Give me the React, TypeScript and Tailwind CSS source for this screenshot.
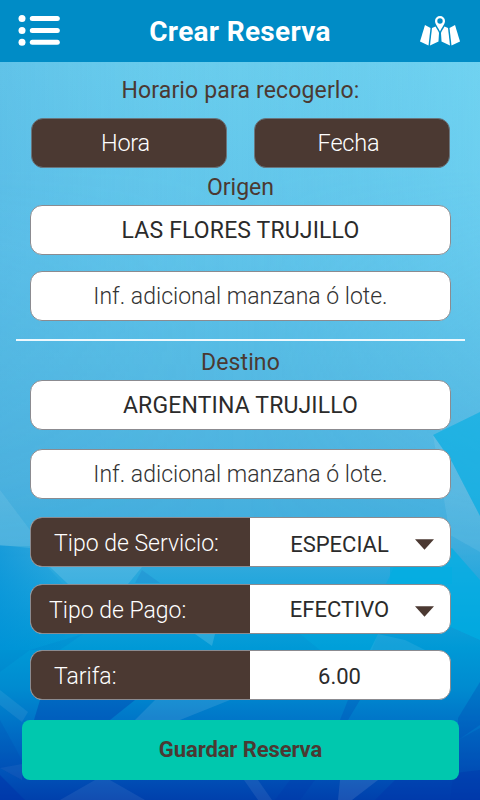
import type React from "react"
import clsx from "clsx"

const fieldClass = "flex h-[50px] w-full items-center justify-center rounded-xl border border-[#8b8b90] bg-white"

export default function App() {
  return (
    <div className="relative h-[800px] w-[480px] overflow-hidden font-[Roboto,sans-serif] text-[#4b3932]">
      <Background />

      <div className="relative flex h-full flex-col">
        <Header />

        <main className="flex flex-col pl-[30px] pr-[29px]">
          <Label className="h-14 pt-[2px] tracking-[0.15px]">Horario para recogerlo:</Label>
          <div className="flex justify-between px-px">
            <PickerButton>Hora</PickerButton>
            <PickerButton>Fecha</PickerButton>
          </div>

          <Label className="h-[37px] pt-1">Origen</Label>
          <Address>LAS FLORES TRUJILLO</Address>
          <ExtraInfo className="mt-4" />

          <div className="-ml-[14px] mt-[18px] h-[2px] w-[449px] bg-[#eef9fe]" />

          <Label className="h-[39px] pt-1.5 tracking-[0.1px]">Destino</Label>
          <Address>ARGENTINA TRUJILLO</Address>
          <ExtraInfo className="mt-[19px]" />

          <OptionRow className="mt-[18px]" label="Tipo de Servicio:" value="ESPECIAL" valueClass="pt-1" select />
          <OptionRow
            className="mt-[17px]"
            label="Tipo de Pago:"
            value="EFECTIVO"
            labelClass="pl-[18px]"
            valueClass="pt-px"
            select
          />
          <OptionRow className="mt-4" label="Tarifa:" value="6.00" valueClass="pt-[2px]" />
        </main>

        <button className="ml-[22px] mt-5 h-[60px] w-[437px] rounded-lg bg-[#00c8ae] pb-px text-[22px] font-bold tracking-[-0.1px]">
          Guardar Reserva
        </button>
      </div>
    </div>
  )
}

function Header() {
  return (
    <header className="flex h-[62px] items-center justify-between bg-[#008cc6] pl-[18px] pr-5 text-white">
      <svg className="h-8 w-[42px]" viewBox="0 0 42 32" fill="currentColor">
        {[3.5, 15.5, 27.2].map((y) => (
          <g key={y}>
            <circle cx="4" cy={y} r="3.500" />
            <rect x="11.800" y={y - 2.5} width="30" height="5" rx="2.500" />
          </g>
        ))}
      </svg>
      <h1 className="pt-px text-[28px] font-bold tracking-[0.3px]">Crear Reserva</h1>
      <svg className="h-[30px] w-10" viewBox="0 0 40 30" fill="currentColor">
        <path d="M5 9 L10.500 12 L8.500 29.500 L0 25.500 Z" />
        <path d="M12 12 L15.500 10.500 L19 16.500 L18.500 25.500 L10 29.500 Z" />
        <path d="M28 12 L24.500 10.500 L21 16.500 L21.500 25.500 L30 29.500 Z" />
        <path d="M35 9 L29.500 12 L31.500 29.500 L40 25.500 Z" />
        <path
          fillRule="evenodd"
          d="M20 0 a5 5 0 0 1 5 5 C25 8 21.500 12 20 15.500 C18.500 12 15 8 15 5 A5 5 0 0 1 20 0 Z M20 2.300 a2.700 2.700 0 1 0 0 5.400 a2.700 2.700 0 1 0 0 -5.400 Z"
        />
      </svg>
    </header>
  )
}

function Label({ children, className }: { children: React.ReactNode; className?: string }) {
  return <div className={clsx("flex items-center justify-center text-[23px]", className)}>{children}</div>
}

function PickerButton({ children }: { children: React.ReactNode }) {
  return (
    <button className="h-[50px] w-[196px] rounded-xl border border-[#69757d] bg-[#4b3932] pr-[7px] pt-[2px] text-[23.5px] font-light tracking-[-0.2px] text-white">
      {children}
    </button>
  )
}

function Address({ children }: { children: React.ReactNode }) {
  return <div className={clsx(fieldClass, "pt-[3px] text-[23px] tracking-[0.15px] text-[#2b2b2b]")}>{children}</div>
}

function ExtraInfo({ className }: { className?: string }) {
  return (
    <div className={clsx(fieldClass, "pt-[3px] text-[23px] font-light text-[#333333]", className)}>
      Inf. adicional manzana ó lote.
    </div>
  )
}

interface OptionRowProps {
  label: string
  value: string
  select?: boolean
  className?: string
  labelClass?: string
  valueClass?: string
}

function OptionRow({ label, value, select, className, labelClass = "pl-[23px]", valueClass }: OptionRowProps) {
  return (
    <div className={clsx("flex h-[50px] overflow-hidden rounded-xl border border-[#8b8b90] bg-white", className)}>
      <div
        className={clsx(
          "-my-px -ml-px flex w-[220px] items-center bg-[#4b3932] pt-1 text-[23px] font-light text-white",
          labelClass,
        )}
      >
        <span className="ml-px">{label}</span>
      </div>
      <div
        className={clsx(
          "relative flex flex-1 items-center justify-center pr-[21px] text-[22px] text-[#2b2b2b]",
          valueClass,
        )}
      >
        {value}
        {select && (
          <svg className="absolute right-4 top-5 h-3 w-[19px]" viewBox="0 0 20 12" fill="#4b3932">
            <path d="M0 1 H20 L10 12 Z" />
          </svg>
        )}
      </div>
    </div>
  )
}

// Low-poly crystal backdrop, faint at the top and denser towards the bottom
function Background() {
  return (
    <svg className="absolute inset-0 h-full w-full" viewBox="0 0 480 800" preserveAspectRatio="none">
      <defs>
        <linearGradient id="base" x1="0" y1="0" x2="0" y2="1">
          <stop offset="0.080" stopColor="#6acded" />
          <stop offset="0.300" stopColor="#60c4ea" />
          <stop offset="0.450" stopColor="#56bbe4" />
          <stop offset="0.600" stopColor="#4cb2df" />
          <stop offset="0.680" stopColor="#3eaddd" />
          <stop offset="0.740" stopColor="#1ea5dc" />
          <stop offset="0.810" stopColor="#0099d6" />
          <stop offset="0.860" stopColor="#008bd0" />
          <stop offset="0.910" stopColor="#0070c6" />
          <stop offset="0.960" stopColor="#0056ba" />
          <stop offset="1" stopColor="#0040ac" />
        </linearGradient>
        <linearGradient id="tint" x1="0" y1="0" x2="1" y2="0">
          <stop offset="0" stopColor="#3b9bd8" stopOpacity="0.200" />
          <stop offset="0.500" stopColor="#60c8f0" stopOpacity="0" />
          <stop offset="1" stopColor="#7fe0fa" stopOpacity="0.300" />
        </linearGradient>
        <linearGradient id="fade" x1="0" y1="0" x2="0" y2="1">
          <stop offset="0.300" stopColor="#ffffff" />
          <stop offset="1" stopColor="#000000" />
        </linearGradient>
        <linearGradient id="leftShade" x1="0" y1="0" x2="1" y2="0">
          <stop offset="0" stopColor="#0090d8" stopOpacity="0.600" />
          <stop offset="1" stopColor="#0090d8" stopOpacity="0" />
        </linearGradient>
        <mask id="fadeMask">
          <rect width="480" height="560" fill="url(#fade)" />
        </mask>
      </defs>
      <rect width="480" height="800" fill="url(#base)" />
      <rect width="480" height="560" fill="url(#tint)" mask="url(#fadeMask)" />

      <g fill="#00aee2">
        <path d="M433 435 L480 412 V516 L452 462 Z" opacity="0.600" />
        <path d="M452 548 L480 580 V640 L390 600 V567 Z" opacity="0.700" />
        <path d="M394 567 H452 V584 H386 Z" opacity="0.500" />
        <path d="M300 634 H378 L372 650 H320 Z" opacity="0.300" />
      </g>
      <path d="M0 545 L30 548 L78 600 L60 650 H0 Z" fill="url(#leftShade)" />
      <g fill="#ffffff">
        <path d="M433 435 L452 462 L480 516 V552 L450 535 Z" opacity="0.080" />
        <path d="M0 490 L30 530 L30 546 L0 546 Z" opacity="0.080" />
        <path d="M50 567 L142 567 L128 584 L68 584 Z" opacity="0.120" />
        <path d="M195 634 L215 634 L212 646 Z" opacity="0.140" />
        <path d="M370 650 L378 634 L405 640 L425 650 Z" opacity="0.080" />
        <path d="M0 690 L28 712 L22 722 L0 705 Z" opacity="0.070" />
        <path d="M135 720 L155 700 L230 700 L180 720 Z" opacity="0.100" />
        <path d="M0 768 L22 764 V780 Z" opacity="0.060" />
        <path d="M110 780 L145 800 H60 L95 780 Z" opacity="0.070" />
        <path d="M340 780 L378 780 L352 800 H338 Z" opacity="0.100" />
        <path d="M258 780 L272 800 H258 L244 780 Z" opacity="0.080" />
      </g>
      <g fill="#0030a8">
        <path d="M83 634 L60 650 H0 V672 L30 650 Z" opacity="0.060" />
        <path d="M40 700 L135 700 L110 720 H34 Z" opacity="0.320" />
        <path d="M0 720 L22 760 V780 L0 768 Z" opacity="0.120" />
        <path d="M360 700 L348 720 H340 L348 700 Z" opacity="0.200" />
        <path d="M480 682 L458 718 V740 L480 725 Z" opacity="0.220" />
        <path d="M458 740 L480 728 V800 H450 Z" opacity="0.180" />
        <path d="M290 780 H315 L300 800 H275 Z" opacity="0.220" />
        <path d="M0 775 L25 800 H0 Z" opacity="0.450" />
        <path d="M395 780 L480 770 V800 H375 Z" opacity="0.350" />
        <path d="M142 570 L160 583 H135 Z" opacity="0.100" />
      </g>
    </svg>
  )
}
